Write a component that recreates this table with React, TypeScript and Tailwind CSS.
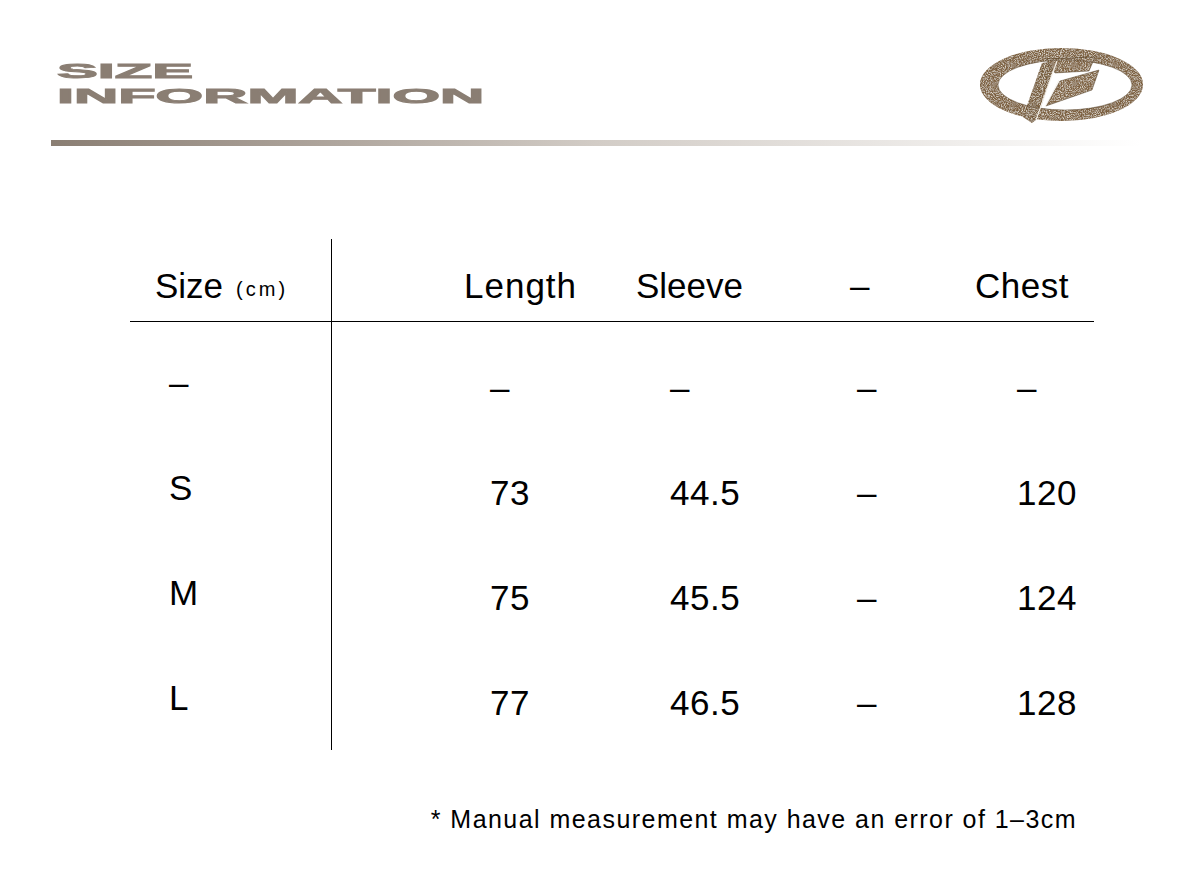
import React from "react";

const Logo = () => (
  <svg width="170" height="82" viewBox="0 0 170 82" className="block">
    <defs>
      <filter id="granite" x="0" y="0" width="100%" height="100%">
        <feTurbulence type="fractalNoise" baseFrequency="0.95" numOctaves="2" seed="7" result="n" />
        <feColorMatrix
          in="n"
          type="matrix"
          values="0 0 0 0 0.8  0 0 0 0 0.76  0 0 0 0 0.68  0 0 0 -2.6 1.5"
          result="light"
        />
        <feComposite in="light" in2="SourceGraphic" operator="in" result="l2" />
        <feTurbulence type="fractalNoise" baseFrequency="1.2" numOctaves="1" seed="19" result="m" />
        <feColorMatrix
          in="m"
          type="matrix"
          values="0 0 0 0 0.3  0 0 0 0 0.21  0 0 0 0 0.12  0 0 0 2.6 -1.1"
          result="dark"
        />
        <feComposite in="dark" in2="SourceGraphic" operator="in" result="d2" />
        <feMerge>
          <feMergeNode in="SourceGraphic" />
          <feMergeNode in="l2" />
          <feMergeNode in="d2" />
        </feMerge>
      </filter>
    </defs>
    <g filter="url(#granite)">
      <path
        fillRule="evenodd"
        fill="#7a5d3c"
        d="M86.5 3 A81.5 36.5 0 1 0 86.5 76 A81.5 36.5 0 1 0 86.5 3 Z M90 15 A67 25 0 1 1 90 65 A67 25 0 1 1 90 15 Z"
      />
      <polygon fill="#755a3a" points="67,18 81,16 62,74 57,78 48,72" />
      <polygon fill="#7e6140" points="71,14 120,12 114,26 80,28" />
      <polygon fill="#7e6140" points="85,36 124,25 117,45 71,61" />
    </g>
    <path
      d="M90 15 A67 25 0 1 0 90 65 A67 25 0 1 0 90 15 Z"
      fill="none"
      stroke="#4d3c25"
      strokeWidth="0.8"
      opacity="0.55"
    />
    <polygon points="71,14 120,12 114,26 80,28" fill="none" stroke="#4a3923" strokeWidth="0.7" opacity="0.6" />
    <polygon points="85,36 124,25 117,45 71,61" fill="none" stroke="#4a3923" strokeWidth="0.7" opacity="0.6" />
    <path d="M82 16 L61 75" stroke="#f5f1ea" strokeWidth="1.1" fill="none" />
    <path d="M84 35 L70 62" stroke="#f5f1ea" strokeWidth="0.9" fill="none" />
  </svg>
);

const heads = ["Length", "Sleeve", "–", "Chest"];
const rows = [
  { size: "–", vals: ["–", "–", "–", "–"] },
  { size: "S", vals: ["73", "44.5", "–", "120"] },
  { size: "M", vals: ["75", "45.5", "–", "124"] },
  { size: "L", vals: ["77", "46.5", "–", "128"] },
];
const headCls = ["tracking-[1px]", "tracking-[0px]", "tracking-[0px]", "tracking-[0.5px]"];
const dataPad = ["pl-[26px]", "pl-[34px]", "pl-[7px]", "pl-[42px]"];

export default function App() {
  return (
    <div
      className="w-[1200px] h-[880px] bg-white text-black overflow-hidden"
      style={{ fontFamily: '"Liberation Sans", Arial, sans-serif' }}
    >
      {/* Header */}
      <div className="flex pt-[45px] pl-[57px] pr-[55px] h-[127px]">
        <div className="mt-[14px] text-[20px] leading-[25px] font-bold text-[#8a7e73] [-webkit-text-stroke:0.9px_#8a7e73]">
          <div className="origin-left scale-x-[3.06] w-[60px] whitespace-nowrap">SIZE</div>
          <div className="origin-left scale-x-[3.06] w-[150px] whitespace-nowrap">INFORMATION</div>
        </div>
        <div className="ml-auto">
          <Logo />
        </div>
      </div>
      <div className="ml-[51px] mt-[13px] w-[1090px] h-[6px] bg-gradient-to-r from-[#8a7e73] via-[#d2ccc6] to-white" />

      {/* Table */}
      <div className="ml-[130px] mt-[93px] w-[964px] text-[35px]">
        <div className="flex h-[83px] border-b border-black">
          <div className="w-[202px] border-r border-black pl-[25px] pt-[27px] leading-[40px] whitespace-nowrap">
            Size
            <span className="ml-[13px] text-[20px] tracking-[3px] align-[2px]">(cm)</span>
          </div>
          <div className="flex-1 pl-[132px] pt-[27px] grid grid-cols-[172px_214px_125px_1fr] leading-[40px]">
            {heads.map((h, i) => (
              <div key={i} className={headCls[i]}>
                {h}
              </div>
            ))}
          </div>
        </div>
        <div className="flex h-[428px]">
          <div className="w-[202px] border-r border-black pl-[39px] pt-[41px]">
            {rows.map((r, i) => (
              <div key={i} className="h-[105px] leading-[40px]">
                {r.size}
              </div>
            ))}
          </div>
          <div className="flex-1 pl-[132px] pt-[46px]">
            {rows.map((r, i) => (
              <div key={i} className="h-[105px] grid grid-cols-[172px_214px_125px_1fr] leading-[40px] tracking-[0.5px]">
                {r.vals.map((v, j) => (
                  <div key={j} className={dataPad[j]}>
                    {v}
                  </div>
                ))}
              </div>
            ))}
          </div>
        </div>
      </div>

      {/* Footer */}
      <div className="mt-[54px] w-[1077px] text-right text-[25px] leading-[30px] tracking-[1.45px]">
        * Manual measurement may have an error of 1–3cm
      </div>
    </div>
  );
}
